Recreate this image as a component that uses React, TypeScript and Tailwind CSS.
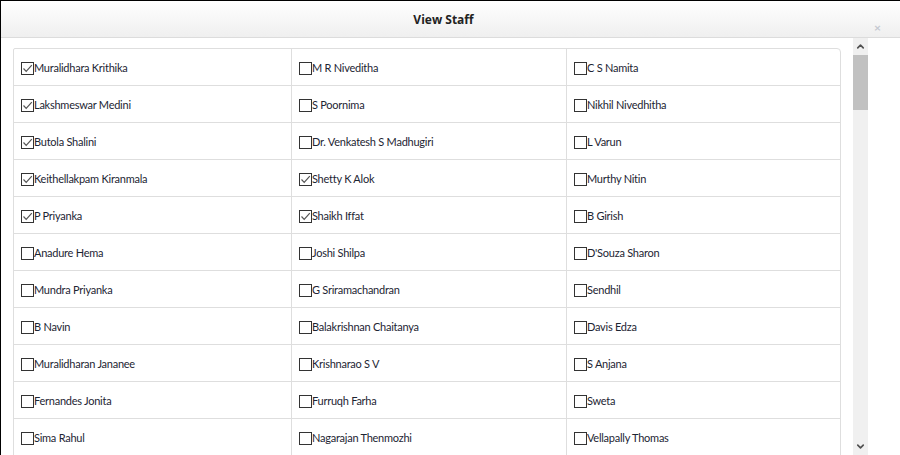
import { ChevronUp, ChevronDown } from 'lucide-react';

interface Staff {
  name: string;
  checked?: boolean;
}

const rows: Staff[][] = [
  [{ name: 'Muralidhara Krithika', checked: true }, { name: 'M R Niveditha' }, { name: 'C S Namita' }],
  [{ name: 'Lakshmeswar Medini', checked: true }, { name: 'S Poornima' }, { name: 'Nikhil Nivedhitha' }],
  [{ name: 'Butola Shalini', checked: true }, { name: 'Dr. Venkatesh S Madhugiri' }, { name: 'L Varun' }],
  [{ name: 'Keithellakpam Kiranmala', checked: true }, { name: 'Shetty K Alok', checked: true }, { name: 'Murthy Nitin' }],
  [{ name: 'P Priyanka', checked: true }, { name: 'Shaikh Iffat', checked: true }, { name: 'B Girish' }],
  [{ name: 'Anadure Hema' }, { name: 'Joshi Shilpa' }, { name: "D'Souza Sharon" }],
  [{ name: 'Mundra Priyanka' }, { name: 'G Sriramachandran' }, { name: 'Sendhil' }],
  [{ name: 'B Navin' }, { name: 'Balakrishnan Chaitanya' }, { name: 'Davis Edza' }],
  [{ name: 'Muralidharan Jananee' }, { name: 'Krishnarao S V' }, { name: 'S Anjana' }],
  [{ name: 'Fernandes Jonita' }, { name: 'Furruqh Farha' }, { name: 'Sweta' }],
  [{ name: 'Sima Rahul' }, { name: 'Nagarajan Thenmozhi' }, { name: 'Vellapally Thomas' }],
];

const Checkbox = ({ checked }: { checked?: boolean }) => (
  <span className="w-[13px] h-[13px] border border-[#333] bg-white flex items-center justify-center shrink-0">
    {checked && (
      <svg width="11" height="11" viewBox="0 0 11 11">
        <path d="M1.5 5.5 L4.2 8.3 L9.8 2.2" fill="none" stroke="#555" strokeWidth="1.2" />
      </svg>
    )}
  </span>
);

export default function App() {
  return (
    <div
      className="w-[900px] h-[455px] overflow-hidden bg-white border-l border-t border-black flex flex-col"
      style={{ fontFamily: 'Lato, "Open Sans", sans-serif' }}
    >
      <div className="h-[37px] shrink-0 bg-gradient-to-b from-white to-[#efefef] border-b border-[#dcdcdc] relative flex items-center justify-center pt-[2px] pr-[14px]">
        <span className="text-[12px] font-bold text-[#222]" style={{ fontFamily: '"Open Sans", sans-serif' }}>
          View Staff
        </span>
        <span className="absolute right-[19px] top-[21px] text-[12px] leading-none font-bold text-[#c4c8d0]">×</span>
      </div>
      <div className="flex flex-1 min-h-0">
        <div className="flex-1 pl-[12px] pr-[12px] pt-[10px] overflow-hidden">
          <div className="border border-[#dedede] rounded-tr-[4px] rounded-tl-[2px]">
            {rows.map((row, i) => (
              <div
                key={i}
                className={`grid grid-cols-[277px_275px_1fr] ${i > 0 ? 'border-t border-[#dedede]' : ''}`}
              >
                {row.map((s, j) => (
                  <div
                    key={j}
                    className={`h-[36px] flex items-center pl-[7px] pt-[2px] ${j > 0 ? 'border-l border-[#dedede]' : ''}`}
                  >
                    <Checkbox checked={s.checked} />
                    <span className="text-[11px] tracking-[-0.25px] text-[#1d2533]">{s.name}</span>
                  </div>
                ))}
              </div>
            ))}
          </div>
        </div>
        <div className="w-[15px] bg-[#f0f0f0] flex flex-col items-center">
          <div className="h-[17px] flex items-center justify-center">
            <ChevronUp size={11} strokeWidth={3.5} color="#505050" />
          </div>
          <div className="w-[15px] h-[55px] bg-[#c1c1c1]" />
          <div className="flex-1" />
          <div className="h-[17px] flex items-center justify-center">
            <ChevronDown size={11} strokeWidth={3.5} color="#505050" />
          </div>
        </div>
        <div className="w-[32px]" />
      </div>
    </div>
  );
}
